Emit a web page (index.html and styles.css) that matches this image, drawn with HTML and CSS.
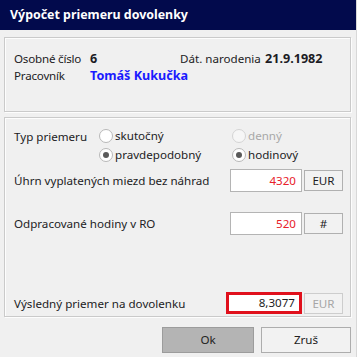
FILE: index.html
```html
<!DOCTYPE html>
<html>
<head>
<meta charset="utf-8">
<link rel="stylesheet" href="styles.css">
</head>
<body>
<div class="window">
  <div class="titlebar">Výpočet priemeru dovolenky</div>
  <div class="content">
    <div class="panel panel-info">
      <div class="info-row">
        <span class="lbl lbl-os">Osobné číslo</span>
        <span class="val val-os">6</span>
        <span class="lbl lbl-dat">Dát. narodenia</span>
        <span class="val">21.9.1982</span>
      </div>
      <div class="info-row">
        <span class="lbl lbl-os">Pracovník</span>
        <span class="val name">Tomáš Kukučka</span>
      </div>
    </div>
    <div class="panel panel-calc">
      <div class="type-row">
        <span class="lbl type-lbl">Typ priemeru</span>
        <div class="radios">
          <label class="radio"><span class="dot"></span>skutočný</label>
          <label class="radio disabled"><span class="dot"></span>denný</label>
          <label class="radio"><span class="dot checked"></span>pravdepodobný</label>
          <label class="radio"><span class="dot checked"></span>hodinový</label>
        </div>
      </div>
      <div class="field-row row-uhrn">
        <span class="lbl field-lbl">Úhrn vyplatených miezd bez náhrad</span>
        <div class="input">4320</div>
        <div class="unit">EUR</div>
      </div>
      <div class="field-row row-hod">
        <span class="lbl field-lbl">Odpracované hodiny v RO</span>
        <div class="input">520</div>
        <div class="unit">#</div>
      </div>
      <div class="field-row row-res">
        <span class="lbl field-lbl">Výsledný priemer na dovolenku</span>
        <div class="input result">8,3077</div>
        <div class="unit disabled">EUR</div>
      </div>
    </div>
    <div class="buttons">
      <div class="btn btn-ok">Ok</div>
      <div class="btn btn-cancel">Zruš</div>
    </div>
  </div>
</div>
</body>
</html>
```

FILE: styles.css
```css
* { box-sizing: border-box; }
html, body { margin: 0; padding: 0; }
body {
  background: #f0f0f0;
  font-family: "Noto Sans", "Open Sans", sans-serif;
  font-size: 11.6px;
  color: #1c1c24;
  width: 357px;
  height: 357px;
  overflow: hidden;
}
.window {
  width: 357px;
  height: 357px;
  border-right: 1px solid #d8d8d8;
  background: #f0f0f0;
}
.titlebar {
  height: 30px;
  background: #020a4c;
  color: #fff;
  font-weight: bold;
  font-size: 12.4px;
  line-height: 30px;
  padding-left: 10px;
}
.content {
  padding: 7px 5px 0 4px;
  display: flex;
  flex-direction: column;
}
.panel {
  border: 1px solid #cacaca;
  box-shadow: inset 1px 1px 0 #fdfdfd, 1px 1px 0 #fdfdfd;
}
.panel-info {
  height: 75px;
  padding: 12px 0 0 9px;
}
.info-row {
  display: flex;
  align-items: center;
  height: 17px;
  white-space: nowrap;
}
.lbl-os { width: 76px; flex-shrink: 0; letter-spacing: -0.2px; }
.val { font-weight: bold; font-size: 12.6px; }
.val-os { width: 90px; flex-shrink: 0; }
.lbl-dat { width: 85px; flex-shrink: 0; }
.name { color: #1a1aff; }
.panel-calc {
  margin-top: 5px;
  height: 200px;
  padding: 8px 7px 0 9px;
  display: flex;
  flex-direction: column;
}
.type-row {
  display: flex;
  align-items: flex-start;
}
.type-lbl {
  width: 85px;
  line-height: 17px;
  padding-top: 2px;
}
.radios {
  display: grid;
  grid-template-columns: 133px auto;
  grid-auto-rows: 19px;
}
.radio {
  display: flex;
  align-items: center;
  gap: 2px;
  white-space: nowrap;
}
.radio.disabled { color: #a8a8a8; }
.dot {
  width: 14px;
  height: 14px;
  border-radius: 50%;
  border: 1px solid #b8b8b8;
  background: #fff;
  position: relative;
}
.radio.disabled .dot { border-color: #d4d4d4; background: #f6f6f6; }
.dot.checked::after {
  content: "";
  position: absolute;
  left: 3px;
  top: 3px;
  width: 6px;
  height: 6px;
  border-radius: 50%;
  background: #5a5a5a;
}
.field-row {
  display: flex;
  align-items: center;
  white-space: nowrap;
}
.field-lbl { flex: 1; }
.row-uhrn { margin-top: 5px; }
.row-hod { margin-top: 20px; }
.row-res { margin-top: 57px; }
.input {
  width: 72px;
  height: 23px;
  background: #fff;
  border: 1px solid #b4b4b4;
  color: #e8202a;
  text-align: right;
  padding-right: 5px;
  line-height: 21px;
}
.unit {
  width: 39px;
  height: 21px;
  margin-left: 2px;
  border: 1px solid #b0b0b0;
  background: #f2f2f2;
  text-align: center;
  line-height: 19px;
}
.unit.disabled {
  color: #a6a6a6;
  border-color: #cdcdcd;
}
.input.result {
  width: 76px;
  height: 22px;
  margin-left: -1px;
  border: 3px solid #e0101c;
  color: #1c1c24;
  line-height: 16px;
  padding-right: 4px;
}
.buttons {
  display: flex;
  justify-content: flex-end;
  gap: 7px;
  margin-top: 10px;
}
.btn {
  height: 26px;
  line-height: 24px;
  text-align: center;
  color: #222;
}
.btn-ok {
  width: 92px;
  background: #b4b4b4;
  border: 1px solid #9c9c9c;
}
.btn-cancel {
  width: 90px;
  background: #f2f2f2;
  border: 1px solid #adadad;
}
```
